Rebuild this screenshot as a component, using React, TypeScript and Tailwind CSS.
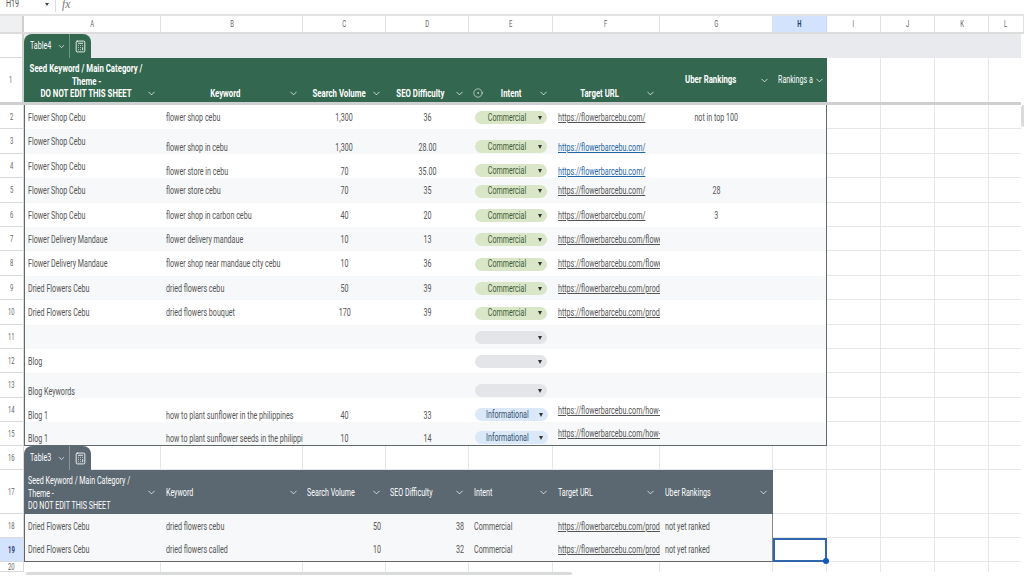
import type { ReactNode } from 'react'
import { Calculator, ChevronDown, CircleDot } from 'lucide-react'

const gridCols = 'grid grid-cols-[24px_137px_142px_83px_83px_84px_107px_113px_54px_54px_54px_54px_35px]'
const line = 'border-[#e4e6e8]'

type Align = 'left' | 'center' | 'right'

// the reference text is squeezed horizontally, so it gets scaled per alignment
function T({ children, align = 'left', head, className = '' }: { children: ReactNode; align?: Align; head?: boolean; className?: string }) {
  const origin = align === 'center' ? 'origin-center' : align === 'right' ? 'origin-right' : 'origin-left'
  const squeeze = head ? 'scale-x-[0.68]' : 'scale-x-[0.62]'
  return <span className={`inline-block shrink-0 whitespace-nowrap ${squeeze} ${origin} ${className}`}>{children}</span>
}

function RowNum({ n, height, active }: { n: number; height: string; active?: boolean }) {
  return (
    <div className={`flex items-center justify-center border-b border-r border-[#d8dadc] text-[9.5px] ${height} ${active ? 'bg-[#d3e3fd] font-bold text-[#1d3f72]' : 'bg-white text-[#666]'}`}>
      <T align="center">{n}</T>
    </div>
  )
}

function Empty({ className = '' }: { className?: string }) {
  return <div className={`border-b border-r ${line} ${className}`} />
}

function Outside() {
  return (
    <>
      <Empty />
      <Empty />
      <Empty />
      <Empty className="border-r-0" />
    </>
  )
}

function Pill({ label, tone }: { label?: string; tone: 'green' | 'blue' | 'grey' }) {
  const bg = tone === 'green' ? 'bg-[#d9e6c8] text-[#3f5b34]' : tone === 'blue' ? 'bg-[#dbe8f8] text-[#33506f]' : 'bg-[#e3e5e8]'
  return (
    <div className={`relative mx-[6px] flex h-[13px] w-[73px] items-center justify-center rounded-full pr-[9px] ${bg}`}>
      {label && <T align="center">{label}</T>}
      <span className="absolute right-[5px] top-[4.5px] h-0 w-0 border-x-[2.5px] border-t-[4px] border-x-transparent border-t-[#333]" />
    </div>
  )
}

type DataRow = {
  n: number
  h: string
  a?: string
  b?: string
  c?: string
  d?: string
  intent?: string
  url?: string
  g?: string
  low?: boolean // keyword..intent sit at the bottom of the cell
  lowA?: boolean
  lowUrl?: boolean
  blueUrl?: boolean
}

const rows: DataRow[] = [
  { n: 2, h: 'h-[24px]', a: 'Flower Shop Cebu', b: 'flower shop cebu', c: '1,300', d: '36', intent: 'Commercial', url: 'https://flowerbarcebu.com/', g: 'not in top 100' },
  { n: 3, h: 'h-[25px]', a: 'Flower Shop Cebu', b: 'flower shop in cebu', c: '1,300', d: '28.00', intent: 'Commercial', url: 'https://flowerbarcebu.com/', low: true, lowUrl: true, blueUrl: true },
  { n: 4, h: 'h-[24px]', a: 'Flower Shop Cebu', b: 'flower store in cebu', c: '70', d: '35.00', intent: 'Commercial', url: 'https://flowerbarcebu.com/', low: true, lowUrl: true, blueUrl: true },
  { n: 5, h: 'h-[25px]', a: 'Flower Shop Cebu', b: 'flower store cebu', c: '70', d: '35', intent: 'Commercial', url: 'https://flowerbarcebu.com/', g: '28' },
  { n: 6, h: 'h-[24px]', a: 'Flower Shop Cebu', b: 'flower shop in carbon cebu', c: '40', d: '20', intent: 'Commercial', url: 'https://flowerbarcebu.com/', g: '3' },
  { n: 7, h: 'h-[24px]', a: 'Flower Delivery Mandaue', b: 'flower delivery mandaue', c: '10', d: '13', intent: 'Commercial', url: 'https://flowerbarcebu.com/flowe' },
  { n: 8, h: 'h-[25px]', a: 'Flower Delivery Mandaue', b: 'flower shop near mandaue city cebu', c: '10', d: '36', intent: 'Commercial', url: 'https://flowerbarcebu.com/flowe' },
  { n: 9, h: 'h-[24px]', a: 'Dried Flowers Cebu', b: 'dried flowers cebu', c: '50', d: '39', intent: 'Commercial', url: 'https://flowerbarcebu.com/produ' },
  { n: 10, h: 'h-[25px]', a: 'Dried Flowers Cebu', b: 'dried flowers bouquet', c: '170', d: '39', intent: 'Commercial', url: 'https://flowerbarcebu.com/produ' },
  { n: 11, h: 'h-[24px]', intent: '' },
  { n: 12, h: 'h-[24px]', a: 'Blog', intent: '' },
  { n: 13, h: 'h-[25px]', a: 'Blog Keywords', intent: '', low: true, lowA: true },
  { n: 14, h: 'h-[24px]', a: 'Blog 1', b: 'how to plant sunflower in the philippines', c: '40', d: '33', intent: 'Informational', url: 'https://flowerbarcebu.com/how-', low: true, lowA: true },
  { n: 15, h: 'h-[24px]', a: 'Blog 1', b: 'how to plant sunflower seeds in the philippi', c: '10', d: '14', intent: 'Informational', url: 'https://flowerbarcebu.com/how-', low: true, lowA: true },
]

function Table4Row({ r, index }: { r: DataRow; index: number }) {
  const tint = index % 2 === 1 ? 'bg-[#f6f8f9]' : 'bg-white'
  const last = r.n === 15 ? 'border-b border-b-[#5f6b66]' : ''
  const vert = r.low ? 'items-end pb-[1px]' : 'items-center pt-[1px]'
  const vertA = r.lowA ? 'items-end pb-[1px]' : 'items-center pt-[1px]'
  const vertUrl = r.lowUrl ? 'items-end pb-[1px]' : 'items-center pt-[1px]'
  const tone = r.intent === 'Commercial' ? 'green' : r.intent === 'Informational' ? 'blue' : 'grey'
  return (
    <div className={`${gridCols} ${r.h}`}>
      <RowNum n={r.n} height={r.h} />
      <div className={`flex overflow-hidden border-l border-l-[#5f6b66] pl-[3px] ${vertA} ${tint} ${last}`}><T>{r.a}</T></div>
      <div className={`flex overflow-hidden pl-[5px] ${vert} ${tint} ${last}`}><T>{r.b}</T></div>
      <div className={`flex justify-center ${vert} ${tint} ${last}`}><T align="center">{r.c}</T></div>
      <div className={`flex justify-center ${vert} ${tint} ${last}`}><T align="center">{r.d}</T></div>
      <div className={`flex ${vert} ${tint} ${last}`}><Pill label={r.intent} tone={tone} /></div>
      <div className={`flex overflow-hidden pl-[5px] ${vertUrl} ${tint} ${last}`}>
        <T className={`underline ${r.blueUrl ? 'text-[#1f66a8]' : 'text-[#555]'}`}>{r.url}</T>
      </div>
      <div className={`flex items-center justify-center pt-[1px] ${tint} ${last}`}><T align="center">{r.g}</T></div>
      <div className={`border-r border-r-[#5f6b66] ${tint} ${last}`} />
      <Outside />
    </div>
  )
}

function HeadCell({ children, chevron = true, className = '' }: { children?: ReactNode; chevron?: boolean; className?: string }) {
  return (
    <div className={`relative flex h-full justify-center ${className}`}>
      {children}
      {chevron && <ChevronDown className="absolute bottom-[3px] right-[4px] h-[11px] w-[11px]" strokeWidth={1.6} />}
    </div>
  )
}

function TableTab({ name, bg }: { name: string; bg: string }) {
  return (
    <div className={`flex h-full w-[67px] items-center rounded-t-[8px] text-white ${bg}`}>
      <div className="flex w-[45px] items-center pl-[6px]">
        <T className="w-[32px]">{name}</T>
        <ChevronDown className="-ml-[5px] h-[9px] w-[9px]" strokeWidth={1.8} />
      </div>
      <div className="flex h-full flex-1 items-center justify-center border-l border-white/30">
        <Calculator className="h-[13px] w-[13px]" strokeWidth={1.6} />
      </div>
    </div>
  )
}

const table3Rows = [
  { n: 18, a: 'Dried Flowers Cebu', b: 'dried flowers cebu', c: '50', d: '38' },
  { n: 19, a: 'Dried Flowers Cebu', b: 'dried flowers called', c: '10', d: '32' },
]

const table3Head = [
  { label: 'Keyword', pl: 'pl-[5px]' },
  { label: 'Search Volume', pl: 'pl-[4px]' },
  { label: 'SEO Difficulty', pl: 'pl-[4px]' },
  { label: 'Intent', pl: 'pl-[5px]' },
  { label: 'Target URL', pl: 'pl-[5px]' },
  { label: 'Uber Rankings', pl: 'pl-[5px]' },
]

export default function App() {
  return (
    <div className="relative h-[576px] w-[1024px] overflow-hidden bg-white font-['Roboto',sans-serif] text-[11.5px] leading-none text-[#555]">
      {/* Formula bar */}
      <div className="flex h-[14px] items-start overflow-hidden">
        <div className="-mt-[2px] w-[40px] pl-[6px]"><T>H19</T></div>
        <span className="mt-[3px] ml-[5px] h-0 w-0 border-x-[2.5px] border-t-[3px] border-x-transparent border-t-[#444]" />
        <span className="ml-[6px] h-[12px] w-px bg-[#ddd]" />
        <span className="-mt-[1px] ml-[6px] font-['Liberation_Serif',serif] italic text-[#777]">fx</span>
      </div>

      {/* Column letters */}
      <div className={`${gridCols} h-[20px] border-y-2 border-y-[#e3e3e3] border-b-[#dcdcdc] text-[9.5px] text-[#666]`}>
        <div className="border-r-2 border-[#cfcfcf] bg-[#eef0f2]" />
        {['A', 'B', 'C', 'D', 'E', 'F', 'G', 'H', 'I', 'J', 'K', 'L'].map((c) => (
          <div key={c} className={`flex items-center justify-center border-r ${c === 'H' ? 'border-[#c7d8f2] bg-[#d3e3fd] font-bold text-[#1d3f72]' : 'border-[#e0e2e4]'}`}>
            <T align="center">{c}</T>
          </div>
        ))}
      </div>

      {/* Row 1: tab band and green header */}
      <div className={`${gridCols} h-[68px]`}>
        <div className="flex flex-col border-r-2 border-[#cfcfcf]">
          <div className="h-[24px] border-b border-[#d8dadc]" />
          <div className="flex flex-1 items-center justify-center text-[9.5px] text-[#666]"><T align="center">1</T></div>
        </div>
        <div className="col-span-12 flex flex-col">
          <div className="h-[24px] bg-[#e8eaed]">
            <TableTab name="Table4" bg="bg-[#33674f]" />
          </div>
          <div className="grid flex-1 grid-cols-[137px_142px_83px_83px_84px_107px_113px_54px_54px_54px_54px_35px]">
            {/* header labels bottom aligned, as in the sheet */}
            <HeadCell className="bg-[#33674f] pr-[12px] font-bold text-white">
              <div className="flex w-full flex-col items-center gap-[2.5px] pt-[5px] leading-[10px]">
                <T head align="center">Seed Keyword / Main Category /</T>
                <T head align="center">Theme -</T>
                <T head align="center">DO NOT EDIT THIS SHEET</T>
              </div>
            </HeadCell>
            <HeadCell className="items-end bg-[#33674f] pb-[3px] pr-[14px] font-bold text-white"><T head align="center">Keyword</T></HeadCell>
            <HeadCell className="items-end bg-[#33674f] pb-[3px] pr-[11px] font-bold text-white"><T head align="center">Search Volume</T></HeadCell>
            <HeadCell className="items-end bg-[#33674f] pb-[3px] pr-[14px] font-bold text-white"><T head align="center">SEO Difficulty</T></HeadCell>
            <HeadCell className="items-end bg-[#33674f] pb-[3px] font-bold text-white">
              <CircleDot className="absolute bottom-[4px] left-[4px] h-[10px] w-[10px]" strokeWidth={1.4} />
              <T head align="center">Intent</T>
            </HeadCell>
            <HeadCell className="items-end bg-[#33674f] pb-[3px] pr-[14px] font-bold text-white"><T head align="center">Target URL</T></HeadCell>
            <HeadCell chevron={false} className="items-center bg-[#33674f] pr-[12px] font-bold text-white">
              <T head align="center">Uber Rankings</T>
              <ChevronDown className="absolute right-[3px] top-[17px] h-[11px] w-[11px]" strokeWidth={1.6} />
            </HeadCell>
            <div className="relative flex items-center bg-[#33674f] pl-[5px] text-white">
              <T>Rankings a</T>
              <ChevronDown className="absolute right-[2px] top-[17px] h-[11px] w-[11px]" strokeWidth={1.6} />
            </div>
            <div className={`border-r ${line}`} />
            <div className={`border-r ${line}`} />
            <div className={`border-r ${line}`} />
            <div />
          </div>
        </div>
      </div>

      {/* frozen pane divider */}
      <div className="h-[3px] bg-[#cdcfd1]" />

      {rows.map((r, i) => (
        <Table4Row key={r.n} r={r} index={i} />
      ))}

      {/* Row 16: Table3 tab */}
      <div className={`${gridCols} h-[24px]`}>
        <RowNum n={16} height="h-[24px]" />
        <div className="relative border-b border-r border-[#e4e6e8]">
          <div className="absolute left-0 top-0 h-[24px]">
            <TableTab name="Table3" bg="bg-[#5b6872]" />
          </div>
        </div>
        <Empty />
        <Empty />
        <Empty />
        <Empty />
        <Empty />
        <Empty />
        <Empty />
        <Outside />
      </div>

      {/* Row 17: grey header */}
      <div className={`${gridCols} h-[44px]`}>
        <RowNum n={17} height="h-[44px]" />
        <div className="relative flex flex-col gap-[2.5px] bg-[#5b6872] pl-[4px] pt-[5px] leading-[10px] text-white">
          <T>Seed Keyword / Main Category /</T>
          <T>Theme -</T>
          <T>DO NOT EDIT THIS SHEET</T>
          <ChevronDown className="absolute right-[4px] top-[17px] h-[11px] w-[11px]" strokeWidth={1.6} />
        </div>
        {table3Head.map((h) => (
          <div key={h.label} className={`relative flex items-center bg-[#5b6872] pt-[1px] text-white ${h.pl}`}>
            <T>{h.label}</T>
            <ChevronDown className="absolute right-[4px] top-[17px] h-[11px] w-[11px]" strokeWidth={1.6} />
          </div>
        ))}
        <Empty />
        <Outside />
      </div>

      {/* Rows 18-19 */}
      {table3Rows.map((r) => {
        const active = r.n === 19
        const edge = active ? 'border-b border-b-[#666]' : ''
        return (
          <div key={r.n} className={`${gridCols} h-[24px]`}>
            <RowNum n={r.n} height="h-[24px]" active={active} />
            <div className={`flex items-center border-l border-l-[#666] bg-[#f6f8f9] pl-[3px] pt-[1px] ${edge}`}><T>{r.a}</T></div>
            <div className={`flex items-center bg-[#f6f8f9] pl-[5px] pt-[1px] ${edge}`}><T>{r.b}</T></div>
            <div className={`flex items-center justify-end bg-[#f6f8f9] pr-[5px] pt-[1px] ${edge}`}><T align="right">{r.c}</T></div>
            <div className={`flex items-center justify-end bg-[#f6f8f9] pr-[5px] pt-[1px] ${edge}`}><T align="right">{r.d}</T></div>
            <div className={`flex items-center bg-[#f6f8f9] pl-[5px] pt-[1px] ${edge}`}><T>Commercial</T></div>
            <div className={`flex items-center overflow-hidden bg-[#f6f8f9] pl-[5px] pt-[1px] ${edge}`}><T className="underline">https://flowerbarcebu.com/produ</T></div>
            <div className={`flex items-center border-r border-r-[#888] bg-[#f6f8f9] pl-[5px] pt-[1px] ${edge}`}><T>not yet ranked</T></div>
            {active ? (
              <div className="relative border-2 border-[#2f66ad]">
                <span className="absolute -bottom-[4px] -right-[4px] h-[6px] w-[6px] rounded-full bg-[#1357b8]" />
              </div>
            ) : (
              <Empty />
            )}
            <Outside />
          </div>
        )
      })}

      {/* Row 20 */}
      <div className={`${gridCols} h-[10px] overflow-hidden`}>
        <RowNum n={20} height="h-[10px]" />
        {Array.from({ length: 11 }, (_, i) => (
          <div key={i} className={`border-r ${line}`} />
        ))}
        <div />
      </div>

      {/* Horizontal scrollbar */}
      <div className="flex h-[3px] bg-white pl-[26px]">
        <div className="h-full w-[546px] rounded-full bg-[#d9dbdd]" />
      </div>

      {/* Vertical scrollbar sits over the sheet */}
      <div className="absolute bottom-0 right-0 top-[34px] w-[3px] bg-white">
        <div className="mt-[71px] h-[22px] w-full rounded-l-full bg-[#d9dbdd]" />
      </div>
    </div>
  )
}
